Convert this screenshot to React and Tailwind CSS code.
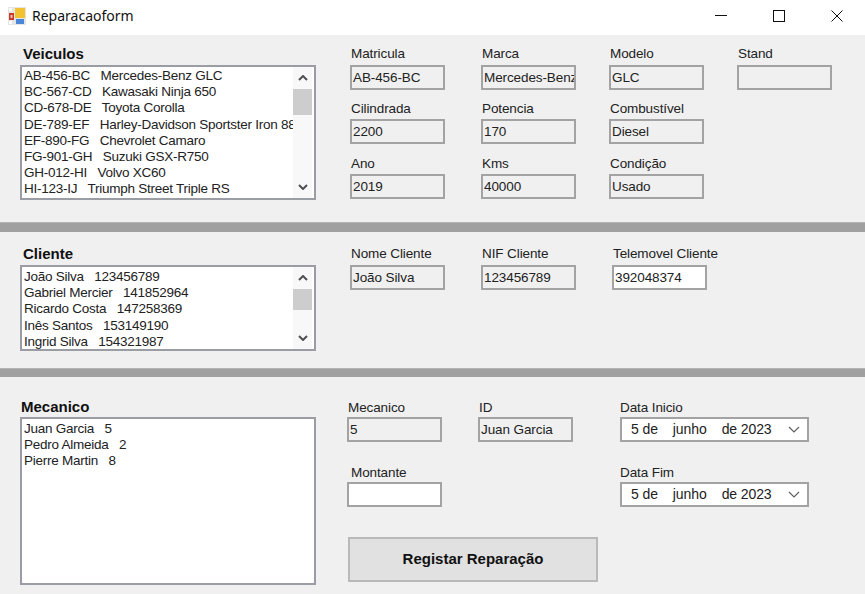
import React from "react";

const font = "font-['Liberation_Sans',Arial,sans-serif]";

const veiculos = [
  "AB-456-BC   Mercedes-Benz GLC",
  "BC-567-CD   Kawasaki Ninja 650",
  "CD-678-DE   Toyota Corolla",
  "DE-789-EF   Harley-Davidson Sportster Iron 883",
  "EF-890-FG   Chevrolet Camaro",
  "FG-901-GH   Suzuki GSX-R750",
  "GH-012-HI   Volvo XC60",
  "HI-123-IJ   Triumph Street Triple RS",
];
const clientes = [
  "João Silva   123456789",
  "Gabriel Mercier   141852964",
  "Ricardo Costa   147258369",
  "Inês Santos   153149190",
  "Ingrid Silva   154321987",
];
const mecanicos = ["Juan Garcia   5", "Pedro Almeida   2", "Pierre Martin   8"];

const Chevron = ({ up }) => (
  <svg viewBox="0 0 10 6" className="w-[10px] h-[6px]" fill="none">
    <path d={up ? "M1 5l4-4 4 4" : "M1 1l4 4 4-4"} stroke="#505050" strokeWidth="2" />
  </svg>
);

const ListBox = ({ items, title, heightClass, thumbClass, titleClass = "leading-[15px] ml-[3px]", textClass = "", scroll = true }) => (
  <div className="w-[296px] shrink-0">
    <div className={`h-[19px] text-[15px] font-bold text-[#111] ${titleClass}`}>{title}</div>
    <div className={`${heightClass} flex border-2 border-[#9a9da3] bg-white overflow-hidden`}>
      <div className={`flex-1 min-w-0 pl-[2px] text-[13.5px] leading-[16.2px] tracking-[-0.25px] text-[#222] overflow-hidden ${textClass}`}>
        {items.map((t) => (
          <div key={t} className="whitespace-pre">{t}</div>
        ))}
      </div>
      {scroll && (
        <div className="w-[19px] shrink-0 mr-[2px] bg-[#f8f8f8] flex flex-col">
          <div className="h-[22px] flex items-center justify-center"><Chevron up /></div>
          <div className={`${thumbClass} bg-[#cdcdcd]`} />
          <div className="flex-1" />
          <div className="h-[22px] flex items-center justify-center"><Chevron /></div>
        </div>
      )}
    </div>
  </div>
);

const Field = ({ label, value, white, className = "", labelClass = "leading-[15px]" }) => (
  <div className={className}>
    <div className={`h-[19px] ml-[1px] text-[13.5px] tracking-[-0.1px] text-[#222] whitespace-nowrap ${labelClass}`}>{label}</div>
    <div className={`w-[95px] h-[25px] border-2 border-[#a3a3a3] px-[1px] text-[13.5px] leading-[22px] tracking-[-0.1px] text-[#222] overflow-hidden whitespace-nowrap ${white ? "bg-white" : "bg-[#f0f0f0]"}`}>
      {value}
    </div>
  </div>
);

const DateField = ({ label }) => (
  <div>
    <div className="h-[19px] text-[13.5px] leading-[19px] tracking-[-0.1px] text-[#222]">{label}</div>
    <div className="w-[189px] h-[25px] border-2 border-[#a3a3a3] bg-white flex items-center pl-[9px] pr-[7px] text-[14px] tracking-[-0.1px] text-[#222]">
      <span>5 de</span>
      <span className="ml-[15px]">junho</span>
      <span className="ml-[15px]">de 2023</span>
      <svg viewBox="0 0 12 7" className="ml-auto w-[12px] h-[7px]" fill="none">
        <path d="M1 1l5 5 5-5" stroke="#606060" strokeWidth="1.2" />
      </svg>
    </div>
  </div>
);

export default function App() {
  return (
    <div className={`${font} w-[865px] h-[594px] flex flex-col overflow-hidden bg-[#f0f0f0]`}>
      {/* barra de titulo */}
      <div className="h-[35px] shrink-0 bg-white flex items-center pb-[4px]">
        <svg viewBox="0 0 18 18" className="w-[18px] h-[18px] ml-[8px]">
          <rect width="18" height="18" fill="#e4e4e4" />
          <rect x="1" y="6" width="5" height="7" fill="#c8382c" />
          <rect x="2.5" y="8" width="2" height="3" fill="#f4c0b0" />
          <rect x="7" y="1" width="10" height="10" fill="#f2c230" />
          <rect x="8" y="12" width="8" height="5" fill="#4a86d8" />
          <rect x="1" y="14" width="3" height="3" fill="#fff" />
          <rect x="1" y="1" width="3" height="3" fill="#fff" />
        </svg>
        <span className="ml-[6px] font-['Noto_Sans',sans-serif] text-[14px] text-[#111]">Reparacaoform</span>
        <div className="ml-auto mr-[-1px] flex items-center h-full">
          <div className="w-[58px] flex justify-center">
            <div className="w-[12px] h-[1px] bg-[#111]" />
          </div>
          <div className="w-[58px] flex justify-center">
            <div className="w-[12px] h-[12px] border border-[#111]" />
          </div>
          <div className="w-[58px] flex justify-center">
            <svg viewBox="0 0 12 12" className="w-[12px] h-[12px]" fill="none">
              <path d="M0.5 0.5l11 11M11.5 0.5l-11 11" stroke="#111" strokeWidth="1" />
            </svg>
          </div>
        </div>
      </div>

      {/* veiculos */}
      <section className="h-[187px] shrink-0 pt-[11px] pl-[20px] flex">
        <ListBox title="Veiculos" items={veiculos} heightClass="h-[135px]" thumbClass="h-[26px]" textClass="pt-[1px]" />
        <div className="ml-[34px] grid grid-cols-[131px_128px_128px_95px] grid-rows-[44px_45px_44px] gap-y-[10px] h-[155px]">
          <Field label="Matricula" value="AB-456-BC" />
          <Field label="Marca" value="Mercedes-Benz GLC" />
          <Field label="Modelo" value="GLC" />
          <Field label="Stand" value="" />
          <Field label="Cilindrada" value="2200" labelClass="leading-[17px]" />
          <Field label="Potencia" value="170" labelClass="leading-[17px]" />
          <Field label="Combustível" value="Diesel" labelClass="leading-[17px]" />
          <div />
          <Field label="Ano" value="2019" labelClass="leading-[17px]" />
          <Field label="Kms" value="40000" labelClass="leading-[17px]" />
          <Field label="Condição" value="Usado" labelClass="leading-[17px]" />
          <div />
        </div>
      </section>

      <div className="h-[10px] shrink-0 bg-[#a0a0a0] border-t border-[#b5b5b5]" />

      {/* cliente */}
      <section className="h-[136px] shrink-0 pt-[14px] pl-[20px] flex">
        <ListBox title="Cliente" items={clientes} heightClass="h-[86px]" thumbClass="h-[21px]" textClass="pt-[2px]" />
        <div className="ml-[34px] flex items-start">
          <Field className="w-[131px]" label="Nome Cliente" value="João Silva" />
          <Field className="w-[131px]" label="NIF Cliente" value="123456789" />
          <Field label="Telemovel Cliente" value="392048374" white />
        </div>
      </section>

      <div className="h-[9px] shrink-0 bg-[#a0a0a0] border-t border-[#b5b5b5]" />

      {/* mecanico */}
      <section className="flex-1 pt-[21px] pl-[20px] flex">
        <ListBox title="Mecanico" items={mecanicos} heightClass="h-[168px]" scroll={false} titleClass="leading-[17px] ml-[1px]" textClass="pt-[2px]" />
        <div className="ml-[31px] flex flex-col">
          <div className="flex items-start">
            <div className="w-[273px] flex flex-col gap-[21px]">
              <div className="flex">
                <Field className="w-[131px]" label="Mecanico" value="5" labelClass="leading-[19px]" />
                <Field label="ID" value="Juan Garcia" labelClass="leading-[19px]" />
              </div>
              <Field label="Montante" value="" white labelClass="leading-[19px] ml-[4px]" />
            </div>
            <div className="flex flex-col gap-[21px]">
              <DateField label="Data Inicio" />
              <DateField label="Data Fim" />
            </div>
          </div>
          <button className="mt-[30px] ml-[1px] w-[250px] h-[45px] bg-[#e1e1e1] border-2 border-[#b9b9b9] text-[15px] font-bold text-[#111]">
            Registar Reparação
          </button>
        </div>
      </section>
    </div>
  );
}
